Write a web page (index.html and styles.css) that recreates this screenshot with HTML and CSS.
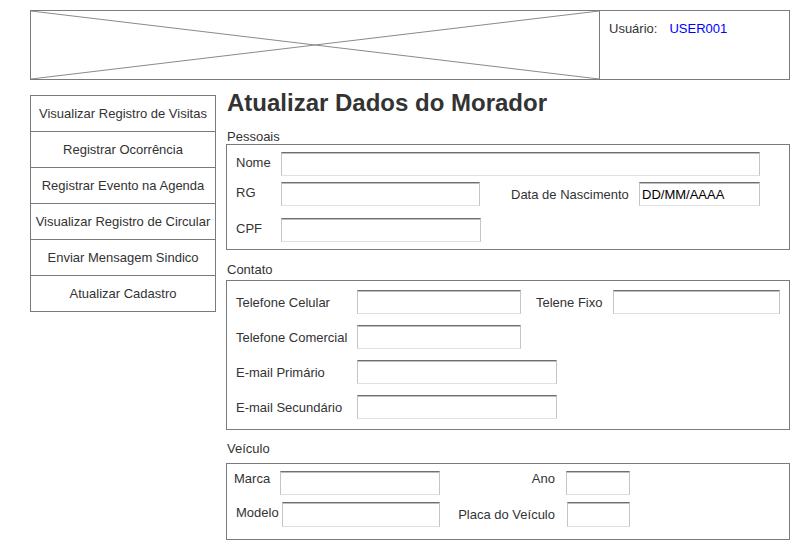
FILE: index.html
```html
<!DOCTYPE html>
<html lang="pt">
<head>
<meta charset="utf-8">
<title>Atualizar Dados do Morador</title>
<link rel="stylesheet" href="styles.css">
</head>
<body>
<div class="page">
  <header class="header">
    <div class="logo">
      <svg class="logo-x" viewBox="0 0 568 68" preserveAspectRatio="none">
        <line x1="0" y1="0" x2="568" y2="68"/>
        <line x1="0" y1="68" x2="568" y2="0"/>
      </svg>
    </div>
    <div class="user"><span class="user-label">Usuário:</span><span class="user-name">USER001</span></div>
  </header>

  <div class="main">
    <nav class="nav">
      <div class="nav-item">Visualizar Registro de Visitas</div>
      <div class="nav-item">Registrar Ocorrência</div>
      <div class="nav-item">Registrar Evento na Agenda</div>
      <div class="nav-item">Visualizar Registro de Circular</div>
      <div class="nav-item">Enviar Mensagem Sindico</div>
      <div class="nav-item">Atualizar Cadastro</div>
    </nav>

    <main class="content">
      <h1 class="title">Atualizar Dados do Morador</h1>

      <div class="section-label">Pessoais</div>
      <div class="box box-pessoais">
        <div class="row">
          <span class="lbl lbl-p">Nome</span><input class="inp w-nome" type="text">
        </div>
        <div class="row r-rg">
          <span class="lbl lbl-p">RG</span><input class="inp w-rg" type="text">
          <span class="lbl lbl-data">Data de Nascimento</span><input class="inp w-data" type="text" value="DD/MM/AAAA">
        </div>
        <div class="row r-cpf">
          <span class="lbl lbl-p">CPF</span><input class="inp w-cpf" type="text">
        </div>
      </div>

      <div class="section-label label-contato">Contato</div>
      <div class="box box-contato">
        <div class="row">
          <span class="lbl lbl-c">Telefone Celular</span><input class="inp w-cel" type="text">
          <span class="lbl lbl-fixo">Telene Fixo</span><input class="inp w-fixo" type="text">
        </div>
        <div class="row">
          <span class="lbl lbl-c">Telefone Comercial</span><input class="inp w-com" type="text">
        </div>
        <div class="row">
          <span class="lbl lbl-c">E-mail Primário</span><input class="inp w-email" type="text">
        </div>
        <div class="row">
          <span class="lbl lbl-c">E-mail Secundário</span><input class="inp w-email" type="text">
        </div>
      </div>

      <div class="section-label label-veiculo">Veículo</div>
      <div class="box box-veiculo">
        <div class="row r-marca">
          <span class="lbl lbl-v">Marca</span><input class="inp w-marca" type="text">
          <span class="lbl lbl-right">Ano</span><input class="inp w-ano" type="text">
        </div>
        <div class="row r-modelo">
          <span class="lbl lbl-v lbl-modelo">Modelo</span><input class="inp w-modelo" type="text">
          <span class="lbl lbl-right lbl-placa">Placa do Veículo</span><input class="inp w-placa" type="text">
        </div>
      </div>
    </main>
  </div>
</div>
</body>
</html>
```
FILE: styles.css
```css
* { box-sizing: border-box; }

body {
  margin: 0;
  background: #fff;
  font-family: "Liberation Sans", Arial, sans-serif;
  font-size: 13px;
  color: #333;
}

.page { padding: 10px 0 0 30px; }

/* Header */
.header {
  display: flex;
  width: 760px;
  height: 70px;
  border: 1px solid #7b7b7b;
}
.logo {
  width: 569px;
  border-right: 1px solid #7b7b7b;
}
.logo-x {
  display: block;
  width: 100%;
  height: 100%;
}
.logo-x line {
  stroke: #8a8a8a;
  stroke-width: 1;
  vector-effect: non-scaling-stroke;
}
.user {
  flex: 1;
  padding: 10px 0 0 9px;
  line-height: 15px;
}
.user-name {
  color: #0000ff;
  margin-left: 12px;
}

/* Main */
.main {
  display: flex;
  align-items: flex-start;
  margin-top: 15px;
}

.nav {
  width: 186px;
  border: 1px solid #7b7b7b;
}
.nav-item {
  height: 35px;
  line-height: 35px;
  text-align: center;
  white-space: nowrap;
}
.nav-item + .nav-item {
  height: 36px;
  border-top: 1px solid #7b7b7b;
}

.content {
  margin-left: 10px;
  width: 564px;
}

.title {
  margin: -2px 0 16px 1px;
  font-size: 24px;
  font-weight: bold;
  line-height: 20px;
  color: #333;
}

.section-label {
  line-height: 15px;
  padding-left: 1px;
}
.label-contato { margin: 12px 0 3px; }
.label-veiculo { margin: 11px 0 7px; }

.box { border: 1px solid #7b7b7b; }

.row {
  display: flex;
  align-items: center;
  height: 24px;
}

.lbl {
  line-height: 15px;
  white-space: nowrap;
}

.inp {
  height: 24px;
  margin: 0;
  padding: 0 2px;
  border: 1px solid #c4c4c4;
  border-top-color: #6f6f6f;
  border-bottom-color: #e0e0e0;
  box-shadow: inset 0 1px 0 #bdbdbd;
  background: #fff;
  font: 13px "Liberation Sans", Arial, sans-serif;
  color: #000;
  outline: none;
}

/* Pessoais */
.box-pessoais {
  height: 106px;
  padding: 7px 0 0 9px;
}
.r-rg { margin-top: 6px; }
.r-cpf { margin-top: 12px; }
.lbl-p { width: 45px; padding-bottom: 3px; }
.w-nome { width: 479px; }
.w-rg { width: 199px; }
.lbl-data { margin-left: 31px; width: 128px; }
.w-data { width: 121px; }
.w-cpf { width: 200px; }

/* Contato */
.box-contato {
  height: 150px;
  padding: 9px 0 0 9px;
}
.box-contato .row + .row { margin-top: 11px; }
.lbl-c { width: 121px; }
.w-cel { width: 164px; }
.lbl-fixo { margin-left: 15px; width: 77px; }
.w-fixo { width: 167px; }
.w-com { width: 164px; }
.w-email { width: 200px; }

/* Veículo */
.box-veiculo {
  height: 77px;
  padding-top: 7px;
}
.r-marca {
  padding-left: 7px;
  align-items: flex-start;
}
.r-modelo {
  margin-top: 7px;
  height: 25px;
  padding-left: 9px;
}
.lbl-v { width: 46px; }
.lbl-modelo { padding-bottom: 4px; }
.w-marca { width: 160px; }
.w-modelo { width: 158px; height: 25px; }
.lbl-right {
  width: 115px;
  text-align: right;
  margin-right: 11px;
}
.lbl-placa { margin-right: 12px; }
.w-ano { width: 64px; }
.w-placa { width: 63px; height: 25px; }
```
